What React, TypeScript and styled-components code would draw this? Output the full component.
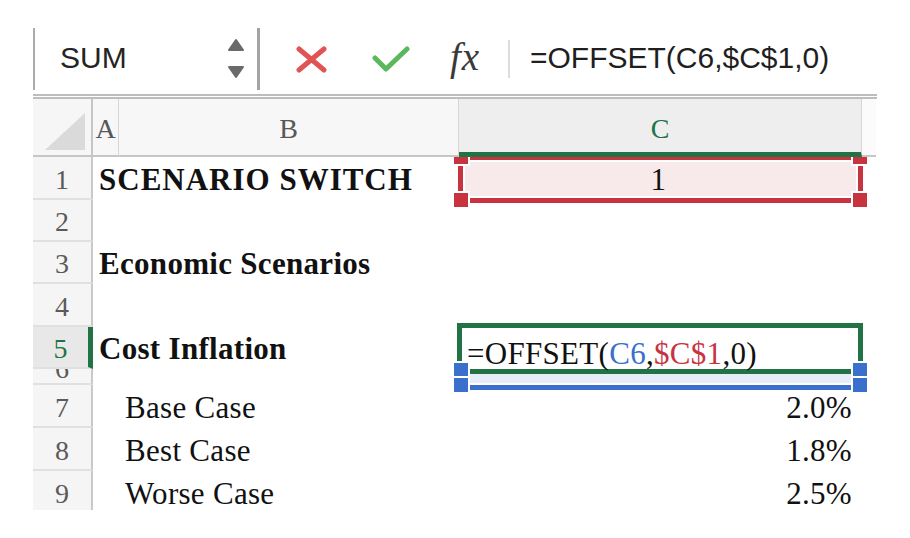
import React from 'react';
import styled, { createGlobalStyle } from 'styled-components';

const GREEN = '#217346';
const RED = '#c7343f';
const BLUE = '#3a6fcb';
const COLS = '60px 26px 340px 403px 14px';

const GlobalStyle = createGlobalStyle`
  html, body { margin: 0; padding: 0; background: #ffffff; }
  body { font-family: "Liberation Serif", "Times New Roman", serif; }
  *, *::before, *::after { box-sizing: border-box; }
`;

const Page = styled.div`
  width: 910px;
  height: 538px;
  overflow: hidden;
  background: #ffffff;
  padding: 28px 0 0 33px;
  display: flex;
  flex-direction: column;
`;

/* ---------- formula bar ---------- */
const FormulaBar = styled.div`
  width: 844px;
  height: 71px;
  flex: none;
  padding-bottom: 4px;
  display: flex;
  align-items: center;
  border-bottom: 5px double #bdbdbd;
`;

const NameBox = styled.div`
  width: 227px;
  height: 62px;
  align-self: flex-start;
  flex: none;
  display: flex;
  align-items: center;
  justify-content: space-between;
  padding: 0 12px 3px 25px;
  border-left: 2px solid #ababab;
  border-right: 3px solid #a3a3a3;
  font-family: "Liberation Sans", Arial, sans-serif;
  font-size: 30px;
  color: #242424;
`;

const IconSvg = styled.svg<{ $gap: number }>`
  display: block;
  flex: none;
  margin-left: ${p => p.$gap}px;
`;

const FxLabel = styled.span`
  flex: none;
  margin-left: 40px;
  width: 40px;
  font-family: "Liberation Serif", "Times New Roman", serif;
  font-style: italic;
  font-size: 39px;
  letter-spacing: 1px;
  color: #3a3a3a;
  line-height: 1;
  padding-bottom: 6px;
`;

const Divider = styled.span`
  flex: none;
  width: 2px;
  height: 38px;
  margin-left: 18px;
  background: #dcdcdc;
`;

const FormulaInput = styled.div`
  flex: 1;
  margin-left: 20px;
  font-family: "Liberation Sans", Arial, sans-serif;
  font-size: 30px;
  color: #1f1f1f;
  white-space: nowrap;
  padding-bottom: 3px;
`;

/* ---------- sheet ---------- */
const Sheet = styled.div`
  width: 843px;
  height: 411px;
  flex: none;
  display: flex;
  flex-direction: column;
  overflow: hidden;
`;

const HeaderRow = styled.div`
  display: grid;
  grid-template-columns: ${COLS};
  height: 58px;
  flex: none;
`;

const CornerCell = styled.div`
  background: #f6f6f6;
  border-right: 2px solid #c6c6c6;
  border-bottom: 2px solid #c6c6c6;
  display: flex;
  justify-content: flex-end;
  align-items: flex-end;
  padding: 0 6px 5px 0;
`;

const ColHeader = styled.div<{ $active?: boolean; $edge?: boolean }>`
  display: flex;
  justify-content: center;
  align-items: flex-end;
  padding-bottom: ${p => (p.$active ? 7 : 10)}px;
  background: ${p => (p.$active ? '#eeeeee' : p.$edge ? '#fbfbfb' : '#f7f7f7')};
  border-right: ${p => (p.$edge ? '0' : '1px solid #d6d6d6')};
  border-bottom: ${p => (p.$active ? `5px solid ${GREEN}` : '2px solid #c6c6c6')};
  color: ${p => (p.$active ? GREEN : '#585858')};
  font-size: 28px;
  line-height: normal;
  white-space: nowrap;
`;

const Body = styled.div`
  flex: 1;
  display: flex;
  flex-direction: column;
  overflow: hidden;
`;

const Row = styled.div<{ $h: number }>`
  display: grid;
  grid-template-columns: ${COLS};
  height: ${p => p.$h}px;
  flex: none;
`;

const RowHeader = styled.div<{ $active?: boolean; $collapsed?: boolean }>`
  display: flex;
  justify-content: center;
  align-items: ${p => (p.$collapsed ? 'flex-start' : 'flex-end')};
  padding-bottom: 2px;
  background: ${p => (p.$active ? '#e8e8e8' : '#f5f5f5')};
  border-right: ${p => (p.$active ? `5px solid ${GREEN}` : '2px solid #c9c9c9')};
  border-bottom: 2px solid #e0e0e0;
  color: ${p => (p.$active ? GREEN : '#5a5a5a')};
  font-size: 28px;
  line-height: ${p => (p.$collapsed ? '0' : 'normal')};
  overflow: hidden;
`;

const Cell = styled.div<{
  $align?: 'flex-start' | 'center' | 'flex-end';
  $bold?: boolean;
  $track?: number;
  $pl?: number;
  $pb?: number;
  $lh?: string;
}>`
  position: relative;
  display: flex;
  align-items: flex-end;
  justify-content: ${p => p.$align ?? 'flex-start'};
  padding: 0 10px ${p => p.$pb ?? 2}px ${p => p.$pl ?? 6}px;
  font-size: 31px;
  line-height: ${p => p.$lh ?? 'normal'};
  font-weight: ${p => (p.$bold ? 700 : 400)};
  letter-spacing: ${p => p.$track ?? 0.3}px;
  color: #111111;
  white-space: nowrap;
  min-width: 0;
`;

const CellText = styled.span`
  position: relative;
  z-index: 4;
`;

const RefText = styled.span<{ $color: string }>`
  color: ${p => p.$color};
`;

const Frame = styled.span<{
  $color: string;
  $fill: string;
  $inset: string;
  $openTop?: boolean;
  $z: number;
}>`
  position: absolute;
  inset: ${p => p.$inset};
  border: 5px solid ${p => p.$color};
  ${p => (p.$openTop ? 'border-top: 0;' : '')}
  padding: ${p => (p.$openTop ? '0 2px 2px' : '2px')};
  background: ${p => p.$fill};
  background-clip: content-box;
  z-index: ${p => p.$z};
  pointer-events: none;
`;

const Handle = styled.span<{ $color: string; $x: string; $y: string }>`
  position: absolute;
  width: 14px;
  height: 14px;
  background: ${p => p.$color};
  box-shadow: 0 0 0 2px #ffffff;
  ${p => p.$x}
  ${p => p.$y}
`;

function Spinner() {
  return (
    <svg width="18" height="42" viewBox="0 0 18 42" style={{ display: 'block', marginTop: 3 }}>
      <polygon points="2,12 9,2 16,12" fill="#6a6a6a" stroke="#6a6a6a" strokeWidth="2" strokeLinejoin="round" />
      <polygon points="2,29 16,29 9,39" fill="#6a6a6a" stroke="#6a6a6a" strokeWidth="2" strokeLinejoin="round" />
    </svg>
  );
}

export default function App() {
  return (
    <>
      <GlobalStyle />
      <Page>
        <FormulaBar>
          <NameBox>
            <span>SUM</span>
            <Spinner />
          </NameBox>
          <IconSvg $gap={36} width="31" height="27" viewBox="0 0 31 27">
            <path d="M3 3 L28 24 M28 3 L3 24" stroke="#e05454" strokeWidth="5" strokeLinecap="round" fill="none" />
          </IconSvg>
          <IconSvg $gap={45} width="38" height="27" viewBox="0 0 38 27">
            <path d="M3 12 L14 23 L35 3" stroke="#5cb85c" strokeWidth="5" strokeLinecap="round" strokeLinejoin="round" fill="none" />
          </IconSvg>
          <FxLabel>fx</FxLabel>
          <Divider />
          <FormulaInput>=OFFSET(C6,$C$1,0)</FormulaInput>
        </FormulaBar>

        <Sheet>
          <HeaderRow>
            <CornerCell>
              <svg width="40" height="37" viewBox="0 0 40 37" style={{ display: 'block' }}>
                <polygon points="40,0 40,37 0,37" fill="#dadada" />
              </svg>
            </CornerCell>
            <ColHeader>A</ColHeader>
            <ColHeader>B</ColHeader>
            <ColHeader $active>C</ColHeader>
            <ColHeader $edge />
          </HeaderRow>

          <Body>
            <Row $h={43}>
              <RowHeader>1</RowHeader>
              <Cell $bold $track={1}>SCENARIO SWITCH</Cell>
              <Cell />
              <Cell $align="center">
                <Frame $color={RED} $fill="#f8eaea" $inset="-2px -1px -3px -1px" $z={1}>
                  <Handle $color={RED} $x="left: -9px;" $y="top: -10px;" />
                  <Handle $color={RED} $x="right: -9px;" $y="top: -10px;" />
                  <Handle $color={RED} $x="left: -9px;" $y="bottom: -9px;" />
                  <Handle $color={RED} $x="right: -9px;" $y="bottom: -9px;" />
                </Frame>
                <CellText>1</CellText>
              </Cell>
              <Cell />
            </Row>

            <Row $h={42}>
              <RowHeader>2</RowHeader>
              <Cell />
              <Cell />
              <Cell />
              <Cell />
            </Row>

            <Row $h={42}>
              <RowHeader>3</RowHeader>
              <Cell $bold>Economic Scenarios</Cell>
              <Cell />
              <Cell />
              <Cell />
            </Row>

            <Row $h={43}>
              <RowHeader>4</RowHeader>
              <Cell />
              <Cell />
              <Cell />
              <Cell />
            </Row>

            <Row $h={42}>
              <RowHeader $active>5</RowHeader>
              <Cell $bold>Cost Inflation</Cell>
              <Cell />
              <Cell $pl={8} $pb={0} $lh="31px">
                <Frame $color={GREEN} $fill="transparent" $inset="-4px -1px -5px -2px" $z={2} />
                <CellText>
                  =OFFSET(<RefText $color={BLUE}>C6</RefText>,<RefText $color={RED}>$C$1</RefText>,0)
                </CellText>
              </Cell>
              <Cell />
            </Row>

            <Row $h={16}>
              <RowHeader $collapsed>6</RowHeader>
              <Cell />
              <Cell />
              <Cell>
                <Frame $color={BLUE} $fill="#e6edf9" $inset="5px -1px -5px -2px" $openTop $z={3}>
                  <Handle $color={BLUE} $x="left: -8px;" $y="top: -11px;" />
                  <Handle $color={BLUE} $x="right: -9px;" $y="top: -11px;" />
                  <Handle $color={BLUE} $x="left: -8px;" $y="bottom: -7px;" />
                  <Handle $color={BLUE} $x="right: -9px;" $y="bottom: -7px;" />
                </Frame>
              </Cell>
              <Cell />
            </Row>

            <Row $h={43}>
              <RowHeader>7</RowHeader>
              <Cell />
              <Cell>Base Case</Cell>
              <Cell $align="flex-end">2.0%</Cell>
              <Cell />
            </Row>

            <Row $h={43}>
              <RowHeader>8</RowHeader>
              <Cell />
              <Cell>Best Case</Cell>
              <Cell $align="flex-end">1.8%</Cell>
              <Cell />
            </Row>

            <Row $h={43}>
              <RowHeader>9</RowHeader>
              <Cell />
              <Cell>Worse Case</Cell>
              <Cell $align="flex-end">2.5%</Cell>
              <Cell />
            </Row>
          </Body>
        </Sheet>
      </Page>
    </>
  );
}
